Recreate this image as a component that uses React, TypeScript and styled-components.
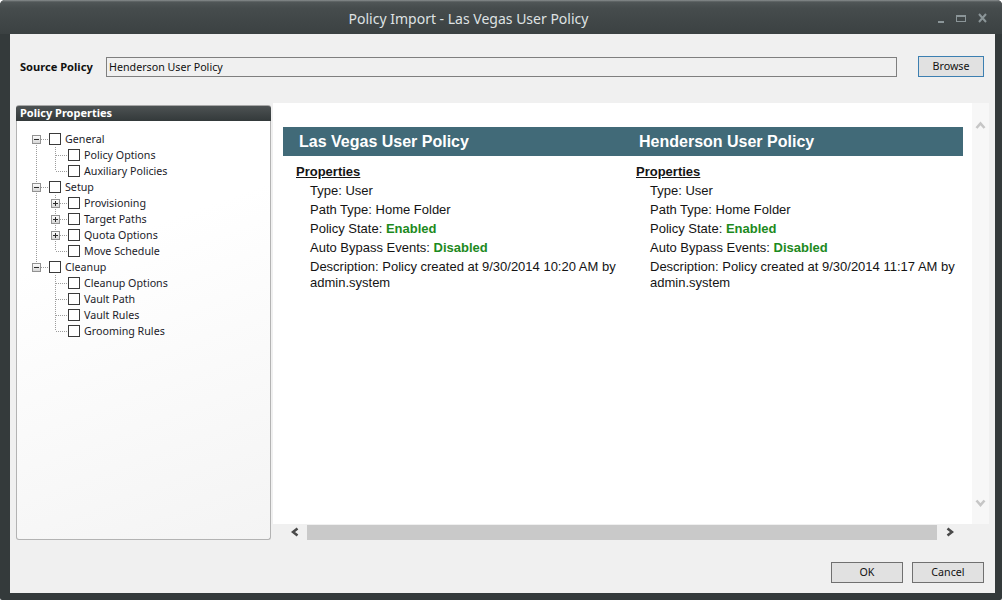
import React from 'react';
import styled, { createGlobalStyle } from 'styled-components';

const GlobalStyle = createGlobalStyle`
  html, body {
    margin: 0;
    padding: 0;
    background: #ffffff;
  }
  body {
    font-family: 'Noto Sans', 'Liberation Sans', sans-serif;
  }
`;

const Window = styled.div`
  width: 1002px;
  height: 600px;
  display: flex;
  flex-direction: column;
  background: #343a3b;
  border-radius: 5px 5px 2px 2px;
  overflow: hidden;
`;

const TitleBar = styled.div`
  height: 34px;
  flex: none;
  display: flex;
  align-items: center;
  padding-top: 2px;
  box-sizing: border-box;
  background: linear-gradient(#8a8f90 0, #505657 2px, #464c4d 8px, #3b4142 34px);
`;

const Title = styled.div`
  flex: 1;
  text-align: center;
  color: #dfe2e3;
  font-size: 14px;
`;

const WinControls = styled.div`
  width: 65px;
  display: flex;
  align-items: center;
  gap: 12px;
  padding-left: 1px;
  box-sizing: border-box;
`;

const Frame = styled.div`
  flex: 1;
  display: flex;
  padding: 0 7px 7px 10px;
  min-height: 0;
`;

const Body = styled.div`
  flex: 1;
  display: flex;
  flex-direction: column;
  background: #f0f0f0;
  padding: 0 6px 10px 6px;
  color: #1a1a1a;
`;

const SourceRow = styled.div`
  margin-top: 22px;
  height: 21px;
  display: flex;
  align-items: center;
  padding: 0 5px 0 4px;
`;

const FieldLabel = styled.div`
  width: 86px;
  font-size: 11.1px;
  font-weight: 700;
  color: #111;
`;

const TextInput = styled.div`
  flex: 1;
  height: 20px;
  box-sizing: border-box;
  border: 1px solid #7f7f7f;
  background: #f0f0f0;
  font-size: 10.7px;
  line-height: 18px;
  padding-left: 2px;
  color: #111;
`;

const Button = styled.div<{ $focused?: boolean }>`
  width: ${p => (p.$focused ? 66 : 72)}px;
  height: 21px;
  box-sizing: border-box;
  border: 1px solid ${p => (p.$focused ? '#3c7fb1' : '#707070')};
  background: #e1e1e1;
  font-size: 10.7px;
  line-height: 19px;
  text-align: center;
  color: #111;
`;

const BrowseButton = styled(Button)`
  margin-left: 21px;
`;

const Main = styled.div`
  margin-top: 26px;
  height: 438px;
  display: flex;
`;

const PropsPanel = styled.div`
  margin-top: 2px;
  width: 255px;
  height: 435px;
  display: flex;
  flex-direction: column;
`;

const PanelHeader = styled.div`
  height: 16px;
  box-sizing: border-box;
  border-top: 1px solid #a8a8a8;
  border-radius: 3px 3px 0 0;
  background: linear-gradient(#4d5253, #33393a);
  color: #ffffff;
  font-size: 11px;
  font-weight: 700;
  line-height: 14px;
  padding-left: 4px;
`;

const PanelBody = styled.div`
  flex: 1;
  border: 1px solid #b3b3b3;
  border-top: none;
  border-radius: 0 0 3px 3px;
  background: linear-gradient(160deg, #ffffff 30%, #f4f4f4);
  padding: 10px 0 0 10px;
`;

const TreeRow = styled.div`
  height: 16px;
  display: flex;
  align-items: center;
`;

const CheckBox = styled.div`
  width: 12px;
  height: 12px;
  box-sizing: border-box;
  border: 1px solid #3a3a3a;
  background: #fff;
  flex: none;
`;

const TreeLabel = styled.span`
  margin-left: 4px;
  font-size: 10.7px;
  color: #1c1c2a;
  white-space: nowrap;
`;

const Viewer = styled.div`
  margin-left: 2px;
  flex: 1;
  display: grid;
  grid-template-columns: 1fr 17px;
  grid-template-rows: 1fr 16px;
`;

const Content = styled.div`
  background: #ffffff;
  padding: 24px 9px 0 10px;
  overflow: hidden;
`;

const VScroll = styled.div`
  background: #f7f7f7;
  display: flex;
  flex-direction: column;
  justify-content: space-between;
  align-items: center;
  padding: 18px 0 17px;
`;

const HScroll = styled.div`
  display: flex;
  align-items: center;
  padding-left: 13px;
`;

const ArrowBox = styled.div`
  width: 17px;
  display: flex;
  justify-content: center;
`;

const Thumb = styled.div`
  width: 630px;
  height: 15px;
  margin: 1px 4px 0;
  background: #c9c9c9;
`;

const Compare = styled.div`
  width: 680px;
  display: grid;
  grid-template-columns: 340px 340px;
  font-family: 'Liberation Sans', Arial, sans-serif;
`;

const ColumnHead = styled.div`
  height: 29px;
  background: #416a78;
  color: #ffffff;
  font-size: 16px;
  font-weight: 700;
  line-height: 29px;
  padding-left: 16px;
`;

const ColumnBody = styled.div`
  padding: 8px 0 0 13px;
  font-size: 13px;
  line-height: 16px;
  color: #141414;
`;

const SectionTitle = styled.div`
  font-weight: 700;
  text-decoration: underline;
`;

const PropItem = styled.div`
  margin-top: 3px;
  padding-left: 14px;
`;

const StateValue = styled.span`
  color: #1d8a1d;
  font-weight: 700;
`;

const Footer = styled.div`
  margin-top: 22px;
  display: flex;
  justify-content: flex-end;
  gap: 9px;
  padding-right: 5px;
`;

type Node = { label: string; children?: Node[]; collapsed?: boolean };

const tree: Node[] = [
  { label: 'General', children: [{ label: 'Policy Options' }, { label: 'Auxiliary Policies' }] },
  {
    label: 'Setup',
    children: [
      { label: 'Provisioning', collapsed: true },
      { label: 'Target Paths', collapsed: true },
      { label: 'Quota Options', collapsed: true },
      { label: 'Move Schedule' },
    ],
  },
  {
    label: 'Cleanup',
    children: [
      { label: 'Cleanup Options' },
      { label: 'Vault Path' },
      { label: 'Vault Rules' },
      { label: 'Grooming Rules' },
    ],
  },
];

const LINE = '#9c9c9c';

const Guide = ({ on }: { on: boolean }) => (
  <svg width="19" height="16" style={{ flex: 'none' }}>
    {on && <line x1="9.5" y1="0" x2="9.5" y2="16" stroke={LINE} strokeDasharray="1 1" />}
  </svg>
);

const Connector = ({ top, bottom, box }: { top: boolean; bottom: boolean; box?: 'plus' | 'minus' }) => (
  <svg width="22" height="16" style={{ flex: 'none' }}>
    <defs>
      <linearGradient id="exp" x1="0" y1="0" x2="0" y2="1">
        <stop offset="0" stopColor="#ffffff" />
        <stop offset="1" stopColor="#d4d4d4" />
      </linearGradient>
    </defs>
    {top && <line x1="9.5" y1="0" x2="9.5" y2="8" stroke={LINE} strokeDasharray="1 1" />}
    {bottom && <line x1="9.5" y1="8" x2="9.5" y2="16" stroke={LINE} strokeDasharray="1 1" />}
    <line x1="10" y1="8.5" x2="22" y2="8.5" stroke={LINE} strokeDasharray="1 1" />
    {box && (
      <g>
        <rect x="5.5" y="4.5" width="8" height="8" fill="url(#exp)" stroke="#929292" />
        <line x1="7" y1="8.5" x2="12" y2="8.5" stroke="#2a2a2a" />
        {box === 'plus' && <line x1="9.5" y1="6" x2="9.5" y2="11" stroke="#2a2a2a" />}
      </g>
    )}
  </svg>
);

function renderTree() {
  const rows: React.ReactNode[] = [];
  tree.forEach((root, i) => {
    const rootLast = i === tree.length - 1;
    rows.push(
      <TreeRow key={root.label}>
        <Connector top={i > 0} bottom={!rootLast} box="minus" />
        <CheckBox />
        <TreeLabel>{root.label}</TreeLabel>
      </TreeRow>
    );
    (root.children || []).forEach((child, j) => {
      const last = j === (root.children || []).length - 1;
      rows.push(
        <TreeRow key={root.label + child.label}>
          <Guide on={!rootLast} />
          <Connector top bottom={!last} box={child.collapsed ? 'plus' : undefined} />
          <CheckBox />
          <TreeLabel>{child.label}</TreeLabel>
        </TreeRow>
      );
    });
  });
  return rows;
}

const Chevron = ({ dir, color }: { dir: 'up' | 'down' | 'left' | 'right'; color: string }) => {
  const vertical = dir === 'up' || dir === 'down';
  const d = {
    up: 'M1.5 7 L5.5 2.5 L9.5 7',
    down: 'M1.5 1.5 L5.5 6 L9.5 1.5',
    left: 'M6.5 1.5 L2 5 L6.5 8.5',
    right: 'M1.5 1.5 L6 5 L1.5 8.5',
  }[dir];
  return (
    <svg width={vertical ? 11 : 8} height={vertical ? 8 : 10}>
      <path d={d} fill="none" stroke={color} strokeWidth="2.6" />
    </svg>
  );
};

type Policy = { name: string; created: string };

const policies: Policy[] = [
  { name: 'Las Vegas User Policy', created: '9/30/2014 10:20 AM' },
  { name: 'Henderson User Policy', created: '9/30/2014 11:17 AM' },
];

export default function App() {
  return (
    <>
      <GlobalStyle />
      <Window>
        <TitleBar>
          <Title>Policy Import - Las Vegas User Policy</Title>
          <WinControls>
            <svg width="6" height="16">
              <rect x="0" y="11" width="6" height="2" fill="#8b9598" />
            </svg>
            <svg width="10" height="16">
              <rect x="0.5" y="5.5" width="9" height="6" fill="none" stroke="#8b9598" />
              <rect x="0" y="5" width="10" height="2" fill="#8b9598" />
            </svg>
            <svg width="9" height="16">
              <path d="M1 4 L8 12 M8 4 L1 12" stroke="#8b9598" strokeWidth="2" />
            </svg>
          </WinControls>
        </TitleBar>
        <Frame>
          <Body>
            <SourceRow>
              <FieldLabel>Source Policy</FieldLabel>
              <TextInput>Henderson User Policy</TextInput>
              <BrowseButton $focused>Browse</BrowseButton>
            </SourceRow>

            <Main>
              <PropsPanel>
                <PanelHeader>Policy Properties</PanelHeader>
                <PanelBody>{renderTree()}</PanelBody>
              </PropsPanel>

              <Viewer>
                <Content>
                  <Compare>
                    {policies.map(p => (
                      <ColumnHead key={p.name}>{p.name}</ColumnHead>
                    ))}
                    {policies.map(p => (
                      <ColumnBody key={p.name}>
                        <SectionTitle>Properties</SectionTitle>
                        <PropItem>Type: User</PropItem>
                        <PropItem>Path Type: Home Folder</PropItem>
                        <PropItem>
                          Policy State: <StateValue>Enabled</StateValue>
                        </PropItem>
                        <PropItem>
                          Auto Bypass Events: <StateValue>Disabled</StateValue>
                        </PropItem>
                        <PropItem>Description: Policy created at {p.created} by admin.system</PropItem>
                      </ColumnBody>
                    ))}
                  </Compare>
                </Content>
                <VScroll>
                  <Chevron dir="up" color="#c6c6c6" />
                  <Chevron dir="down" color="#c6c6c6" />
                </VScroll>
                <HScroll>
                  <ArrowBox>
                    <Chevron dir="left" color="#4a4a4a" />
                  </ArrowBox>
                  <Thumb />
                  <ArrowBox>
                    <Chevron dir="right" color="#4a4a4a" />
                  </ArrowBox>
                </HScroll>
                <div />
              </Viewer>
            </Main>

            <Footer>
              <Button>OK</Button>
              <Button>Cancel</Button>
            </Footer>
          </Body>
        </Frame>
      </Window>
    </>
  );
}
